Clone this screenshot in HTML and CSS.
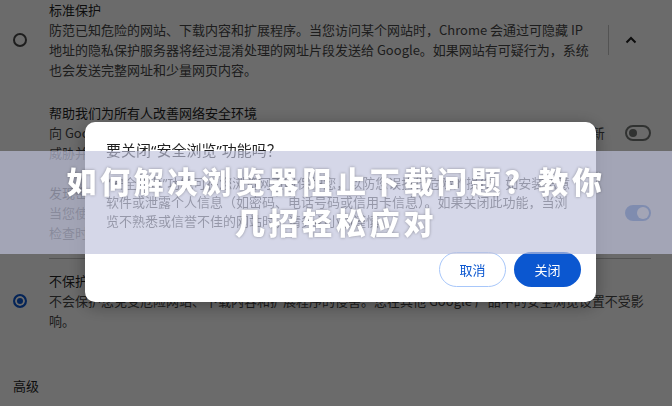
FILE: index.html
```html
<!DOCTYPE html>
<html lang="zh-CN">
<head>
    <meta charset="UTF-8">
    <meta name="viewport" content="width=device-width, initial-scale=1.0">
    <title>安全浏览</title>
    <link rel="stylesheet" href="styles.css">
</head>
<body>
    <div class="page">
        <div class="option">
            <span class="radio"></span>
            <div class="option-body">
                <div class="option-title">标准保护</div>
                <div class="option-desc">防范已知危险的网站、下载内容和扩展程序。当您访问某个网站时，Chrome 会通过可隐藏 IP 地址的隐私保护服务器将经过混淆处理的网址片段发送给 Google。如果网站有可疑行为，系统也会发送完整网址和少量网页内容。</div>
            </div>
            <div class="divider-v"></div>
            <div class="expand">
                <svg width="12" height="8" viewBox="0 0 12 8"><path d="M1.5 6.5 6 2l4.5 4.5" fill="none" stroke="#1f1f1f" stroke-width="2"/></svg>
            </div>
        </div>

        <div class="sub-list">
            <div class="sub-row">
                <div class="sub-text">
                    <div class="option-title">帮助我们为所有人改善网络安全环境</div>
                    <div>向 Google 发送您访问的部分网页的网址、有限的系统信息以及部分网页内容，以帮助我们发现新威胁并保护网络上的所有人。</div>
                </div>
                <span class="toggle"><i></i></span>
            </div>
            <div class="sub-row">
                <div class="sub-text">
                    <div class="option-title">发现密码遭到数据泄露时向您发出警告</div>
                    <div>当您使用的密码在数据泄露事件中遭到泄露时，Chrome 会提醒您。系统会在您每次登录该网页检查时对密码进行加密处理，Google 无法读取您的密码。</div>
                </div>
                <span class="toggle on"><i></i></span>
            </div>
        </div>

        <div class="option option-last">
            <span class="radio checked"></span>
            <div class="option-body wide">
                <div class="option-title">不保护（不建议）</div>
                <div class="option-desc">不会保护您免受危险网站、下载内容和扩展程序的侵害。您在其他 Google 产品中的安全浏览设置不受影响。</div>
            </div>
        </div>

        <div class="section-label">高级</div>
    </div>

    <div class="backdrop"></div>

    <div class="dialog">
        <div class="dialog-title">要关闭“安全浏览”功能吗？</div>
        <p class="dialog-text">“安全浏览”功能可在您浏览网页时保护您，以防您误执行危险的操作，如安装恶意软件或泄露个人信息（如密码、电话号码或信用卡信息）。如果关闭此功能，当浏览不熟悉或信誉不佳的网站时，请务必小心谨慎。</p>
        <div class="dialog-actions">
            <button class="btn btn-cancel">取消</button>
            <button class="btn btn-ok">关闭</button>
        </div>
    </div>

    <div class="banner">
        <h1 class="banner-title">如何解决浏览器阻止下载问题？教你几招轻松应对</h1>
    </div>
</body>
</html>
```

FILE: styles.css
```css
* {
    margin: 0;
    padding: 0;
    box-sizing: border-box;
}
body {
    width: 672px;
    height: 406px;
    overflow: hidden;
    background-color: #fff;
    color: #474747;
    font-family: "Noto Sans CJK SC", "Noto Sans", sans-serif;
    font-size: 13px;
    line-height: 20px;
}
.page {
    padding-right: 21px;
}
.option {
    display: flex;
    align-items: center;
    padding-left: 13px;
}
.radio {
    flex: none;
    width: 14px;
    height: 14px;
    border: 2px solid #474747;
    border-radius: 50%;
}
.radio.checked {
    border-color: #0b57d0;
    background-color: #0b57d0;
    box-shadow: inset 0 0 0 2px #fff;
}
.option-body {
    margin-left: 22px;
    width: 545px;
}
.option-body.wide {
    width: 600px;
}
.option-title {
    color: #1f1f1f;
}
.divider-v {
    width: 1px;
    height: 30px;
    margin-left: 14px;
    background-color: #c7c7c7;
}
.expand {
    flex: 1;
    display: flex;
    justify-content: center;
    padding-left: 2px;
}

.sub-list {
    margin-left: 49px;
    padding: 23px 0 15px;
    border-bottom: 1px solid #c7c7c7;
}
.sub-row {
    display: flex;
    align-items: center;
    justify-content: space-between;
}
.sub-row + .sub-row {
    margin-top: 20px;
}
.sub-text {
    width: 558px;
}
/* 开关 */
.toggle {
    display: flex;
    align-items: center;
    width: 26px;
    height: 16px;
    padding: 0 2px;
    border: 2px solid #747775;
    border-radius: 8px;
}
.toggle i {
    width: 8px;
    height: 8px;
    border-radius: 50%;
    background-color: #747775;
}
.toggle.on {
    justify-content: flex-end;
    padding: 0;
    border-color: #0b57d0;
    background-color: #0b57d0;
}
.toggle.on i {
    width: 12px;
    height: 12px;
    background-color: #fff;
}

.option-last {
    padding-top: 12px;
}
.section-label {
    margin-top: 45px;
    padding-left: 13px;
    color: #1f1f1f;
}

/* 弹窗 */
.backdrop {
    position: fixed;
    top: 0;
    left: 0;
    right: 0;
    bottom: 0;
    background-color: rgba(0, 0, 0, 0.58);
}
.dialog {
    position: fixed;
    left: 85px;
    top: 122px;
    width: 511px;
    height: 180px;
    display: flex;
    flex-direction: column;
    padding: 18px 15px 15px 21px;
    background-color: #fff;
    border-radius: 10px;
    box-shadow: 0 4px 18px rgba(0, 0, 0, 0.35);
    /* 引号用窄的西文字形 */
    font-family: "Noto Sans", "Noto Sans CJK SC", sans-serif;
}
.dialog-title {
    font-size: 15px;
    line-height: 20px;
    color: #1f1f1f;
}
.dialog-text {
    width: 470px;
    margin-top: 14px;
    line-height: 19px;
}
.dialog-actions {
    margin-top: auto;
    display: flex;
    justify-content: flex-end;
    gap: 8px;
}
.btn {
    width: 67px;
    height: 35px;
    border-radius: 18px;
    font-family: "Noto Sans CJK SC", sans-serif;
    font-size: 13px;
}
.btn-cancel {
    background-color: #fff;
    border: 1px solid #a8c7fa;
    color: #0b57d0;
}
.btn-ok {
    background-color: #0b57d0;
    border: none;
    color: #fff;
}

/* 标题横幅 */
.banner {
    position: fixed;
    left: 0;
    right: 0;
    top: 151px;
    height: 103px;
    display: flex;
    align-items: center;
    justify-content: center;
    padding-bottom: 4px;
    background-color: rgba(192, 195, 220, 0.66);
}
.banner-title {
    width: 560px;
    text-align: center;
    font-size: 30px;
    font-weight: 900;
    line-height: 41px;
    letter-spacing: 3.7px;
    color: #fff;
    text-shadow: 0 0 3px rgba(0, 0, 0, 0.35);
}
```
